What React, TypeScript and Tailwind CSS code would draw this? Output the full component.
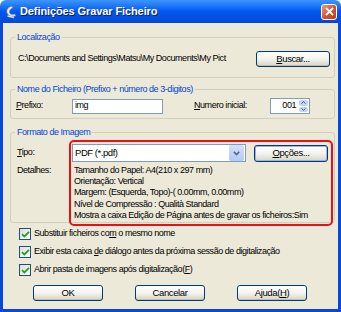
import React from "react";

const font = { fontFamily: "'Liberation Sans', Arial, sans-serif" };

function XpButton({ children, className = "" }: { children: React.ReactNode; className?: string }) {
  return (
    <div
      className={`h-[16px] flex items-center justify-center rounded-[3px] border border-[#003c74] bg-gradient-to-b from-white via-[#f4f3ee] to-[#d8d4c4] text-black text-[9.5px] tracking-[-0.4px] shadow-[inset_0_-1px_0_#c4bdb0] ${className}`}
    >
      {children}
    </div>
  );
}

function Check({ children }: { children: React.ReactNode }) {
  return (
    <div className="h-[18px] flex items-center pl-[16px] gap-[3px]">
      <div className="w-[12px] h-[12px] border border-[#1c5180] bg-gradient-to-br from-[#dcdcd4] to-white flex items-center justify-center">
        <svg width="9" height="9" viewBox="0 0 9 9">
          <path d="M1 4.2 L3.3 6.5 L8 1.8" stroke="#21a121" strokeWidth="1.8" fill="none" />
        </svg>
      </div>
      <span className="whitespace-nowrap text-[9px] tracking-[-0.45px] text-black">{children}</span>
    </div>
  );
}

function Legend({ children }: { children: React.ReactNode }) {
  return (
    <legend className="ml-[4px] px-[2px] whitespace-nowrap text-[9px] leading-[12px] tracking-[-0.45px] text-[#0046d5]">
      {children}
    </legend>
  );
}

export default function App() {
  return (
    <div className="w-[341px] h-[312px] flex flex-col overflow-hidden" style={font}>
      {/* title bar */}
      <div className="h-[23px] shrink-0 flex items-center rounded-t-[6px] bg-gradient-to-b from-[#3d95ff] via-[#0058ee] to-[#0548d6] pl-[5px] pr-[4px]">
        <svg width="12" height="14" viewBox="0 0 12 14" className="mr-[3px]">
          <path d="M7 1 C3 2 1 5 2 8 C3 11 7 12 11 11 L10 9 C7 10 4.5 9 4.5 7 C4.5 5 6 3.5 8 3 Z" fill="#e8eef8" stroke="#5a6d8e" strokeWidth="0.6" />
          <path d="M2.5 11 L9 12.5" stroke="#dfe6f2" strokeWidth="1.4" />
        </svg>
        <span className="text-white font-bold text-[11px] tracking-[-0.1px] [text-shadow:1px_1px_0_#0a1f6e]">
          Definições Gravar Ficheiro
        </span>
        <div className="ml-auto w-[16px] h-[16px] rounded-[3px] border border-white bg-gradient-to-br from-[#e99a80] via-[#d9532f] to-[#c13a17] flex items-center justify-center">
          <svg width="9" height="9" viewBox="0 0 9 9">
            <path d="M1 1 L8 8 M8 1 L1 8" stroke="white" strokeWidth="1.8" />
          </svg>
        </div>
      </div>

      {/* body */}
      <div className="flex-1 flex flex-col bg-[#ece9d8] border-x-[3px] border-b-[3px] border-[#0747d9] pl-[7px] pr-[3px]">
        {/* Localização */}
        <fieldset className="mt-[8px] h-[47px] border border-[#d0d0bf] rounded-[3px]">
          <Legend>Localização</Legend>
          <div className="flex items-center justify-between pl-[7px] pr-[4px] pt-[8px]">
            <span className="whitespace-nowrap text-[9px] tracking-[-0.45px] text-black">
              C:\Documents and Settings\Matsu\My Documents\My Pict
            </span>
            <XpButton className="w-[74px]">
              <span>
                <u>B</u>uscar...
              </span>
            </XpButton>
          </div>
        </fieldset>

        {/* Nome do Ficheiro */}
        <fieldset className="mt-[5px] h-[36px] border border-[#d0d0bf] rounded-[3px]">
          <Legend>Nome do Ficheiro (Prefixo + número de 3-digitos)</Legend>
          <div className="flex items-center pl-[5px] pt-[3px] text-[9px] tracking-[-0.45px] whitespace-nowrap">
            <span className="w-[56px]">
              <u>P</u>refixo:
            </span>
            <div className="w-[91px] h-[15px] border border-[#7f9db9] bg-white flex items-center pl-[2px]">img</div>
            <span className="ml-[31px] w-[76px]">
              <u>N</u>umero inicial:
            </span>
            <div className="w-[40px] h-[16px] border border-[#7f9db9] bg-white flex items-center">
              <span className="flex-1 text-right pr-[2px]">001</span>
              <div className="w-[11px] h-full flex flex-col gap-px p-px">
                <div className="flex-1 rounded-[2px] bg-[#c6d5f7] flex items-center justify-center">
                  <svg width="5" height="3" viewBox="0 0 5 3">
                    <path d="M0.5 2.7 L2.5 0.5 L4.5 2.7" stroke="#4d6185" strokeWidth="1" fill="none" />
                  </svg>
                </div>
                <div className="flex-1 rounded-[2px] bg-[#c6d5f7] flex items-center justify-center">
                  <svg width="5" height="3" viewBox="0 0 5 3">
                    <path d="M0.5 0.3 L2.5 2.5 L4.5 0.3" stroke="#4d6185" strokeWidth="1" fill="none" />
                  </svg>
                </div>
              </div>
            </div>
          </div>
        </fieldset>

        {/* Formato de Imagem */}
        <fieldset className="mt-[7px] h-[97px] border border-[#d0d0bf] rounded-[3px]">
          <Legend>Formato de Imagem</Legend>
          <div className="flex pl-[6px] pr-[1px] pt-[2px] text-[9px] tracking-[-0.45px] text-black whitespace-nowrap">
            <div className="w-[52px] flex flex-col">
              <span className="h-[22px] pt-[6px] leading-[12px]">
                <u>T</u>ipo:
              </span>
              <span className="mt-[3px] leading-[11px]">Detalhes:</span>
            </div>
            <div className="flex-1 rounded-[5px] border-2 border-[#e8101a] pl-[1px] pr-[1px] pt-[2px] pb-[3px]">
              <div className="flex items-center gap-[8px]">
                <div className="w-[174px] h-[18px] border border-[#7f9db9] bg-white flex items-center">
                  <span className="flex-1 pl-[2px] text-[9.5px]">PDF (*.pdf)</span>
                  <div className="w-[15px] h-[16px] m-px rounded-[2px] bg-gradient-to-b from-[#d5e1fb] to-[#b3c8f5] flex items-center justify-center">
                    <svg width="7" height="5" viewBox="0 0 7 5">
                      <path d="M0.8 0.8 L3.5 3.6 L6.2 0.8" stroke="#4d6185" strokeWidth="1.5" fill="none" />
                    </svg>
                  </div>
                </div>
                <XpButton className="w-[74px] h-[17px] border-[#0a246a] shadow-[inset_0_0_0_1px_#9bb3e6]">
                  <span>
                    <u>O</u>pções...
                  </span>
                </XpButton>
              </div>
              <div className="mt-[3px] pl-[2px] leading-[11.2px]">
                <div>Tamanho do Papel: A4(210 x 297 mm)</div>
                <div>Orientação: Vertical</div>
                <div>Margem: (Esquerda, Topo)-( 0.00mm, 0.00mm)</div>
                <div>Nível de Compressão : Qualità Standard</div>
                <div>Mostra a caixa Edição de Página antes de gravar os ficheiros:Sim</div>
              </div>
            </div>
          </div>
        </fieldset>

        {/* checkboxes */}
        <div className="mt-[2px] flex flex-col -ml-[7px]">
          <Check>
            Substituir ficheiros co<u>m</u> o mesmo nome
          </Check>
          <Check>
            Exibir esta caixa <u>d</u>e diálogo antes da próxima sessão de digitalização
          </Check>
          <Check>
            Abrir pasta de imagens após digitalização(<u>F</u>)
          </Check>
        </div>

        {/* buttons */}
        <div className="mt-[6px] flex -ml-[7px] pl-[30px] gap-[32px]">
          <XpButton className="w-[70px]">OK</XpButton>
          <XpButton className="w-[70px]">Cancelar</XpButton>
          <XpButton className="w-[70px]">
            <span>
              Ajuda(<u>H</u>)
            </span>
          </XpButton>
        </div>
      </div>
    </div>
  );
}
